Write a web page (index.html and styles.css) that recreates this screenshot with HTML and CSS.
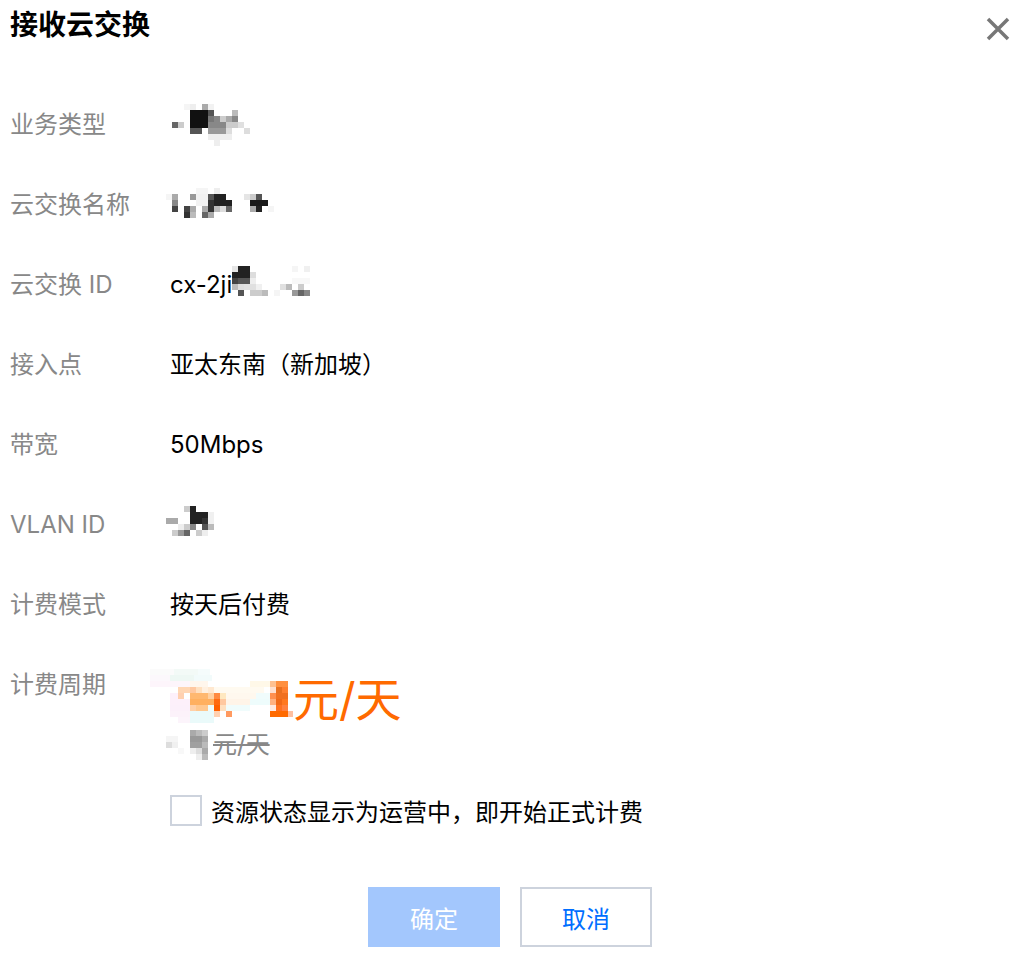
FILE: index.html
```html
<!DOCTYPE html>
<html lang="zh-CN">
<head>
    <meta charset="UTF-8">
    <meta name="viewport" content="width=device-width, initial-scale=1.0">
    <title>接收云交换</title>
    <link rel="stylesheet" href="styles.css">
</head>
<body>
    <div class="dialog">
        <div class="dialog-head">
            <h2 class="dialog-title">接收云交换</h2>
            <button class="dialog-close" aria-label="关闭">
                <svg width="24" height="24" viewBox="0 0 24 24"><path d="M2 2L22 22M22 2L2 22" stroke="#777" stroke-width="3.5" fill="none"/></svg>
            </button>
        </div>

        <ul class="info-list">
            <li class="info-row">
                <span class="info-label">业务类型</span>
                <span class="info-value">
                    <!-- masked value -->
                    <svg class="mosaic" width="84" height="42" viewBox="0 0 84 42">
                        <rect x="14" y="0" width="6" height="6" fill="#f5f5f5"/>
                        <rect x="20" y="0" width="6" height="6" fill="#eee"/>
                        <rect x="32" y="0" width="6" height="6" fill="#aaa"/>
                        <rect x="38" y="0" width="6" height="6" fill="#f2f2f2"/>
                        <rect x="20" y="6" width="18" height="6" fill="#111"/>
                        <rect x="38" y="6" width="6" height="6" fill="#555"/>
                        <rect x="62" y="6" width="6" height="6" fill="#bbb"/>
                        <rect x="20" y="12" width="18" height="6" fill="#111"/>
                        <rect x="38" y="12" width="6" height="6" fill="#777"/>
                        <rect x="44" y="12" width="6" height="6" fill="#888"/>
                        <rect x="50" y="12" width="6" height="6" fill="#ccc"/>
                        <rect x="56" y="12" width="6" height="6" fill="#aaa"/>
                        <rect x="62" y="12" width="6" height="6" fill="#888"/>
                        <rect x="2" y="18" width="6" height="6" fill="#666"/>
                        <rect x="8" y="18" width="6" height="6" fill="#ccc"/>
                        <rect x="20" y="18" width="18" height="6" fill="#111"/>
                        <rect x="38" y="18" width="18" height="6" fill="#888"/>
                        <rect x="56" y="18" width="12" height="6" fill="#ccc"/>
                        <rect x="68" y="18" width="6" height="6" fill="#e0e0e0"/>
                        <rect x="20" y="24" width="12" height="6" fill="#555"/>
                        <rect x="38" y="24" width="18" height="6" fill="#999"/>
                        <rect x="56" y="24" width="6" height="6" fill="#ddd"/>
                        <rect x="74" y="24" width="6" height="6" fill="#ddd"/>
                        <rect x="38" y="30" width="24" height="6" fill="#eee"/>
                        <rect x="44" y="36" width="6" height="6" fill="#eee"/>
                    </svg>
                </span>
            </li>
            <li class="info-row">
                <span class="info-label">云交换名称</span>
                <span class="info-value">
                    <svg class="mosaic mosaic-wide" width="112" height="30" viewBox="0 0 112 30">
                        <rect x="32" y="0" width="12" height="6" fill="#f5f5f5"/>
                        <rect x="50" y="0" width="6" height="6" fill="#eee"/>
                        <rect x="2" y="6" width="6" height="6" fill="#f5f5f5"/>
                        <rect x="8" y="6" width="6" height="6" fill="#aaa"/>
                        <rect x="26" y="6" width="6" height="6" fill="#999"/>
                        <rect x="32" y="6" width="12" height="6" fill="#f2f2f2"/>
                        <rect x="44" y="6" width="6" height="6" fill="#555"/>
                        <rect x="50" y="6" width="12" height="6" fill="#222"/>
                        <rect x="80" y="6" width="6" height="6" fill="#e5e5e5"/>
                        <rect x="86" y="6" width="6" height="6" fill="#ccc"/>
                        <rect x="92" y="6" width="6" height="6" fill="#555"/>
                        <rect x="8" y="12" width="6" height="6" fill="#888"/>
                        <rect x="32" y="12" width="12" height="6" fill="#f2f2f2"/>
                        <rect x="44" y="12" width="6" height="6" fill="#333"/>
                        <rect x="50" y="12" width="18" height="6" fill="#222"/>
                        <rect x="86" y="12" width="18" height="6" fill="#1a1a1a"/>
                        <rect x="8" y="18" width="6" height="6" fill="#444"/>
                        <rect x="20" y="18" width="6" height="6" fill="#444"/>
                        <rect x="26" y="18" width="6" height="6" fill="#aaa"/>
                        <rect x="38" y="18" width="6" height="6" fill="#aaa"/>
                        <rect x="44" y="18" width="6" height="6" fill="#333"/>
                        <rect x="50" y="18" width="6" height="6" fill="#bbb"/>
                        <rect x="56" y="18" width="6" height="6" fill="#ddd"/>
                        <rect x="62" y="18" width="6" height="6" fill="#666"/>
                        <rect x="86" y="18" width="6" height="6" fill="#aaa"/>
                        <rect x="92" y="18" width="6" height="6" fill="#222"/>
                        <rect x="104" y="18" width="6" height="6" fill="#f5f5f5"/>
                        <rect x="20" y="24" width="6" height="6" fill="#333"/>
                        <rect x="26" y="24" width="6" height="6" fill="#bbb"/>
                        <rect x="38" y="24" width="6" height="6" fill="#666"/>
                        <rect x="44" y="24" width="6" height="6" fill="#aaa"/>
                    </svg>
                </span>
            </li>
            <li class="info-row">
                <span class="info-label">云交换 ID</span>
                <span class="info-value">
                    cx-2ji
                    <svg class="mosaic mosaic-up" width="78" height="30" viewBox="0 0 78 30">
                        <rect x="0" y="0" width="6" height="6" fill="#e5e5e5"/>
                        <rect x="6" y="0" width="12" height="6" fill="#222"/>
                        <rect x="60" y="0" width="6" height="6" fill="#f5f5f5"/>
                        <rect x="72" y="0" width="6" height="6" fill="#f0f0f0"/>
                        <rect x="0" y="6" width="18" height="6" fill="#222"/>
                        <rect x="18" y="6" width="6" height="6" fill="#ddd"/>
                        <rect x="0" y="12" width="6" height="6" fill="#444"/>
                        <rect x="6" y="12" width="12" height="6" fill="#555"/>
                        <rect x="18" y="12" width="6" height="6" fill="#eee"/>
                        <rect x="60" y="12" width="18" height="6" fill="#f8f8f8"/>
                        <rect x="0" y="18" width="6" height="6" fill="#bbb"/>
                        <rect x="6" y="18" width="6" height="6" fill="#ddd"/>
                        <rect x="12" y="18" width="12" height="6" fill="#e0e0e0"/>
                        <rect x="24" y="18" width="6" height="6" fill="#f0f0f0"/>
                        <rect x="48" y="18" width="6" height="6" fill="#e0e0e0"/>
                        <rect x="54" y="18" width="6" height="6" fill="#bbb"/>
                        <rect x="66" y="18" width="6" height="6" fill="#ccc"/>
                        <rect x="6" y="24" width="6" height="6" fill="#555"/>
                        <rect x="18" y="24" width="12" height="6" fill="#ccc"/>
                        <rect x="30" y="24" width="6" height="6" fill="#bbb"/>
                        <rect x="42" y="24" width="6" height="6" fill="#f5f5f5"/>
                        <rect x="60" y="24" width="6" height="6" fill="#999"/>
                        <rect x="66" y="24" width="6" height="6" fill="#666"/>
                        <rect x="72" y="24" width="6" height="6" fill="#888"/>
                    </svg>
                </span>
            </li>
            <li class="info-row">
                <span class="info-label">接入点</span>
                <span class="info-value">亚太东南（新加坡）</span>
            </li>
            <li class="info-row">
                <span class="info-label">带宽</span>
                <span class="info-value">50Mbps</span>
            </li>
            <li class="info-row">
                <span class="info-label">VLAN ID</span>
                <span class="info-value">
                    <svg class="mosaic mosaic-vlan" width="48" height="30" viewBox="0 0 48 30">
                        <rect x="18" y="0" width="6" height="6" fill="#ccc"/>
                        <rect x="24" y="0" width="6" height="6" fill="#222"/>
                        <rect x="24" y="6" width="18" height="6" fill="#222"/>
                        <rect x="42" y="6" width="6" height="6" fill="#f0f0f0"/>
                        <rect x="0" y="12" width="12" height="6" fill="#aaa"/>
                        <rect x="24" y="12" width="12" height="6" fill="#222"/>
                        <rect x="36" y="12" width="6" height="6" fill="#333"/>
                        <rect x="42" y="12" width="6" height="6" fill="#f0f0f0"/>
                        <rect x="12" y="18" width="6" height="6" fill="#eee"/>
                        <rect x="18" y="18" width="6" height="6" fill="#ccc"/>
                        <rect x="24" y="18" width="6" height="6" fill="#888"/>
                        <rect x="36" y="18" width="6" height="6" fill="#555"/>
                        <rect x="42" y="18" width="6" height="6" fill="#bbb"/>
                        <rect x="6" y="24" width="6" height="6" fill="#ccc"/>
                        <rect x="12" y="24" width="6" height="6" fill="#999"/>
                        <rect x="18" y="24" width="6" height="6" fill="#666"/>
                        <rect x="30" y="24" width="6" height="6" fill="#ccc"/>
                        <rect x="36" y="24" width="6" height="6" fill="#eee"/>
                    </svg>
                </span>
            </li>
            <li class="info-row">
                <span class="info-label">计费模式</span>
                <span class="info-value">按天后付费</span>
            </li>
            <li class="info-row">
                <span class="info-label">计费周期</span>
                <span class="info-value price">
                    <span class="price-now">
                        <svg class="mosaic mosaic-price" width="143" height="54" viewBox="0 0 143 54">
                            <rect x="0" y="0" width="50" height="6" fill="#fbfbfb"/>
                            <rect x="24" y="0" width="24" height="6" fill="#f3faf7"/>
                            <rect x="48" y="0" width="12" height="6" fill="#f5fcfc"/>
                            <rect x="0" y="6" width="40" height="6" fill="#fcf8fc"/>
                            <rect x="20" y="6" width="24" height="6" fill="#eef8f4"/>
                            <rect x="44" y="6" width="18" height="6" fill="#f2fbfb"/>
                            <rect x="0" y="12" width="40" height="6" fill="#fdf5fb"/>
                            <rect x="40" y="12" width="18" height="6" fill="#fff6ec"/>
                            <rect x="100" y="12" width="20" height="6" fill="#fff8e8"/>
                            <rect x="120" y="12" width="6" height="6" fill="#ffc090"/>
                            <rect x="126" y="12" width="12" height="6" fill="#ff9040"/>
                            <rect x="28" y="18" width="12" height="6" fill="#ffd6b4"/>
                            <rect x="40" y="18" width="6" height="6" fill="#ffc8a0"/>
                            <rect x="46" y="18" width="6" height="6" fill="#ffe0c0"/>
                            <rect x="52" y="18" width="6" height="6" fill="#fff0e0"/>
                            <rect x="58" y="18" width="6" height="6" fill="#ffe8d0"/>
                            <rect x="64" y="18" width="50" height="6" fill="#fffaf0"/>
                            <rect x="120" y="18" width="6" height="6" fill="#ffe0d0"/>
                            <rect x="126" y="18" width="6" height="6" fill="#e87020"/>
                            <rect x="132" y="18" width="6" height="6" fill="#ff8030"/>
                            <rect x="20" y="24" width="8" height="6" fill="#fdf0fa"/>
                            <rect x="28" y="24" width="6" height="6" fill="#ffd0b0"/>
                            <rect x="40" y="24" width="18" height="6" fill="#ffb870"/>
                            <rect x="58" y="24" width="6" height="6" fill="#ffd0a0"/>
                            <rect x="64" y="24" width="6" height="6" fill="#ff8a40"/>
                            <rect x="70" y="24" width="6" height="6" fill="#ffe8c0"/>
                            <rect x="76" y="24" width="30" height="6" fill="#fff8ee"/>
                            <rect x="106" y="24" width="14" height="6" fill="#f0fcfc"/>
                            <rect x="120" y="24" width="6" height="6" fill="#ff9050"/>
                            <rect x="126" y="24" width="12" height="6" fill="#f07020"/>
                            <rect x="20" y="30" width="20" height="6" fill="#fdf0fa"/>
                            <rect x="40" y="30" width="24" height="6" fill="#ffb060"/>
                            <rect x="64" y="30" width="6" height="6" fill="#ff6a10"/>
                            <rect x="70" y="30" width="6" height="6" fill="#ffc8a0"/>
                            <rect x="76" y="30" width="24" height="6" fill="#fff4e8"/>
                            <rect x="100" y="30" width="20" height="6" fill="#eefcfc"/>
                            <rect x="120" y="30" width="6" height="6" fill="#ffb080"/>
                            <rect x="126" y="30" width="6" height="6" fill="#f06818"/>
                            <rect x="132" y="30" width="6" height="6" fill="#ff7820"/>
                            <rect x="20" y="36" width="20" height="6" fill="#fcf0fa"/>
                            <rect x="40" y="36" width="6" height="6" fill="#ffd0a8"/>
                            <rect x="46" y="36" width="12" height="6" fill="#ffc890"/>
                            <rect x="58" y="36" width="6" height="6" fill="#eefcfc"/>
                            <rect x="64" y="36" width="6" height="6" fill="#ff6000"/>
                            <rect x="70" y="36" width="6" height="6" fill="#ffe0c0"/>
                            <rect x="76" y="36" width="24" height="6" fill="#f0fcfc"/>
                            <rect x="120" y="36" width="6" height="6" fill="#ffe8e0"/>
                            <rect x="126" y="36" width="6" height="6" fill="#ff7020"/>
                            <rect x="132" y="36" width="6" height="6" fill="#ff8040"/>
                            <rect x="20" y="42" width="20" height="6" fill="#fcf2fa"/>
                            <rect x="40" y="42" width="24" height="6" fill="#eafafa"/>
                            <rect x="64" y="42" width="6" height="6" fill="#ffd0b0"/>
                            <rect x="76" y="42" width="6" height="6" fill="#ff9a60"/>
                            <rect x="120" y="42" width="18" height="6" fill="#ff6a00"/>
                            <rect x="138" y="42" width="5" height="6" fill="#ffc0a0"/>
                            <rect x="28" y="48" width="12" height="6" fill="#fcf4fb"/>
                            <rect x="40" y="48" width="24" height="6" fill="#eafafa"/>
                        </svg>元/天
                    </span>
                    <span class="price-old">
                        <svg class="mosaic" width="47" height="30" viewBox="0 0 47 30">
                            <rect x="24" y="0" width="6" height="6" fill="#aaa"/>
                            <rect x="30" y="0" width="6" height="6" fill="#bbb"/>
                            <rect x="36" y="0" width="6" height="6" fill="#ccc"/>
                            <rect x="0" y="6" width="12" height="6" fill="#f5f5f5"/>
                            <rect x="24" y="6" width="12" height="6" fill="#999"/>
                            <rect x="36" y="6" width="6" height="6" fill="#aaa"/>
                            <rect x="0" y="12" width="6" height="6" fill="#ddd"/>
                            <rect x="6" y="12" width="6" height="6" fill="#f0f0f0"/>
                            <rect x="24" y="12" width="12" height="6" fill="#a0a0a0"/>
                            <rect x="36" y="12" width="6" height="6" fill="#bbb"/>
                            <rect x="12" y="18" width="6" height="6" fill="#f8f8f8"/>
                            <rect x="24" y="18" width="6" height="6" fill="#eee"/>
                            <rect x="30" y="18" width="6" height="6" fill="#ddd"/>
                            <rect x="36" y="18" width="6" height="6" fill="#aaa"/>
                            <rect x="30" y="24" width="6" height="6" fill="#eee"/>
                            <rect x="36" y="24" width="6" height="6" fill="#bbb"/>
                        </svg><s>元/天</s>
                    </span>
                </span>
            </li>
        </ul>

        <label class="agree">
            <input type="checkbox" class="agree-input">
            <span class="agree-box"></span>
            资源状态显示为运营中，即开始正式计费
        </label>

        <div class="dialog-foot">
            <button class="btn btn-primary" disabled>确定</button>
            <button class="btn btn-default">取消</button>
        </div>
    </div>
</body>
</html>
```

FILE: styles.css
```css
body {
    margin: 0;
    font-family: Inter, "Noto Sans CJK SC", sans-serif;
    color: #000;
    background: #fff;
}

.dialog {
    padding: 0 5px 0 10px;
}

.dialog-head {
    display: flex;
    justify-content: space-between;
    align-items: flex-start;
    height: 50px;
}

.dialog-title {
    margin: 0;
    font-size: 28px;
    font-weight: 700;
    line-height: 50px;
}

.dialog-close {
    margin-top: 17px;
    padding: 0;
    border: none;
    background: none;
    width: 24px;
    height: 24px;
    cursor: pointer;
}

.dialog-close svg {
    display: block;
}

/* label / value rows */
.info-list {
    list-style: none;
    margin: 35px 0 0;
    padding: 0;
}

.info-row {
    display: flex;
    padding: 28px 0;
    font-size: 24px;
    line-height: 24px;
}

.info-label {
    width: 160px;
    flex-shrink: 0;
    color: #888;
}

.info-value {
    display: flex;
    align-items: center;
    height: 24px;
    white-space: nowrap;
}

.mosaic {
    display: block;
    flex-shrink: 0;
}

.mosaic-wide {
    margin-left: -6px;
    margin-top: -4px;
}

.mosaic-up {
    margin-top: -8px;
}

.mosaic-vlan {
    margin-left: -4px;
    margin-top: -8px;
}

/* price */
.info-value.price {
    flex-direction: column;
    align-items: flex-start;
    height: auto;
}

.price-now {
    display: flex;
    align-items: center;
    height: 52px;
    font-size: 46px;
    color: #ff6a00;
}

.mosaic-price {
    margin-left: -20px;
    margin-top: -6px;
}

.price-old {
    display: flex;
    align-items: center;
    height: 40px;
    margin-left: -4px;
    font-size: 24px;
    color: #888;
}

.price-old s {
    text-decoration-thickness: 2px;
}

/* checkbox */
.agree {
    display: flex;
    align-items: center;
    gap: 9px;
    margin-left: 160px;
    height: 34px;
    font-size: 24px;
    cursor: pointer;
}

.agree-input {
    display: none;
}

.agree-box {
    width: 28px;
    height: 27px;
    border: 2px solid #cdd3dd;
    background: #fff;
}

/* footer buttons */
.dialog-foot {
    display: flex;
    justify-content: center;
    gap: 20px;
    margin-top: 60px;
}

.btn {
    width: 132px;
    height: 60px;
    font-family: inherit;
    font-size: 24px;
    cursor: pointer;
}

.btn-primary {
    border: none;
    background: #a3c7fd;
    color: #fff;
}

.btn-default {
    border: 2px solid #cdd3dd;
    background: #fff;
    color: #006eff;
}
```
